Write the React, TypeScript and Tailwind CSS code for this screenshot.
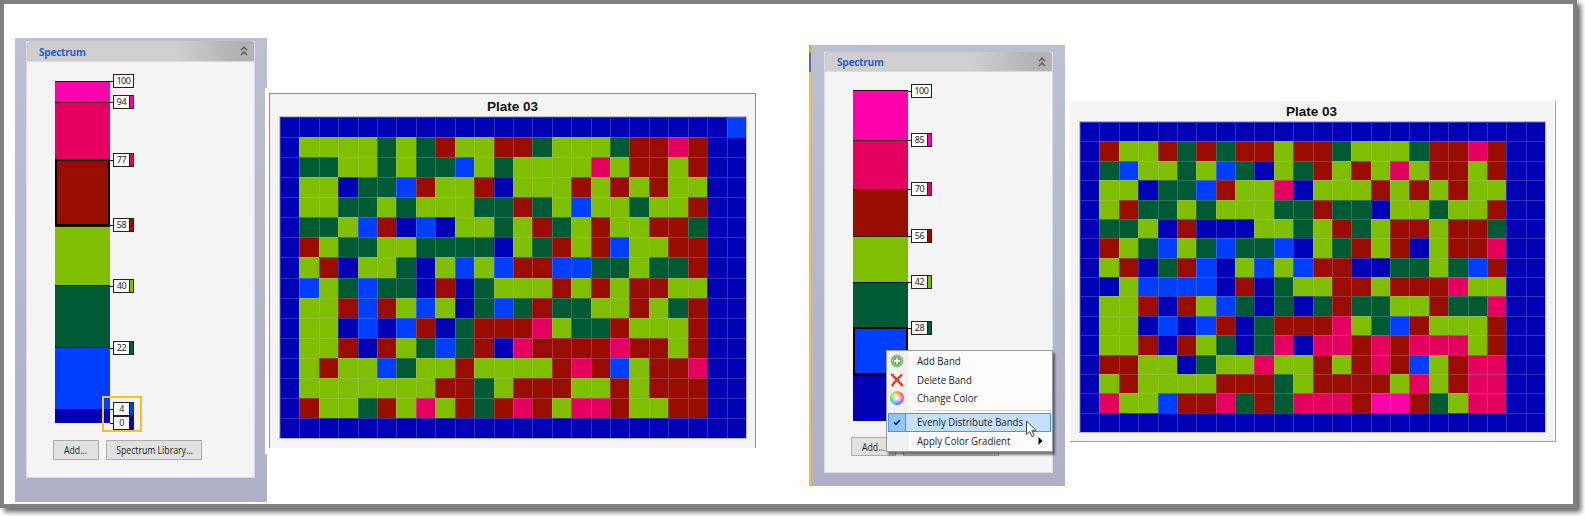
import React from "react";

const COLORS: Record<string, string> = {
  n: "bg-[#0000b4]",
  b: "bg-[#003fff]",
  g: "bg-[#005a34]",
  l: "bg-[#80bf00]",
  r: "bg-[#990d00]",
  p: "bg-[#e50060]",
  m: "bg-[#ff00aa]",
};

const PLATE_A = [
  "nnnnnnnnnnnnnnnnnnnnnnnb",
  "nllllglgrllrrglllgrrprnn",
  "nggllglggblgllllplrrlrnn",
  "nllnggbrllrnlllrlrlrllnn",
  "nllgglglllggrglbllgllrnn",
  "ngglbrnbnllglrglrllrrgnn",
  "nrlggllggggnlgrlrbllrrnn",
  "nlrnllgnlblbrrbbgglggrnn",
  "nblgbggnrnglllrlrlrrllnn",
  "nllrbrlblngbgrggllrlgrnn",
  "nllnbnbrngrrrplggrlllrnn",
  "nllrnrlgbgrnprrrrprrlrnn",
  "nlrllbgllrllllrprblrrpnn",
  "nlllllllrrglrrrllrlrrrnn",
  "nrllgrlplrgrprlpprllrrnn",
  "nnnnnnnnnnnnnnnnnnnnnnnn",
];

const PLATE_B = [
  "nnnnnnnnnnnnnnnnnnnnnnnn",
  "nrllrgrgrrlrrglllgrrprnn",
  "ngbllglbgnlgrlrlplrrlrnn",
  "nllnggbrllpnlllrlrlrllnn",
  "nlrgglglllggrggnllgllrnn",
  "ngglnrnnnllglrglrrlrrgnn",
  "nrlgblgbggbnlgrlrnlrrpnn",
  "nlrngrbnlblbrrnngglgbrnn",
  "nnlbbbbnrngllrrlrrrpllnn",
  "nllrnrlbgngngrggllrggpnn",
  "nllnbnbrngrrrplgbrlllrnn",
  "nllrnrlgngpnpprprppplrnn",
  "nrrllngllpllrlrprblrppnn",
  "nlrllllrrrglrrrrlplrppnn",
  "npllbrrpgrgppprmmrglppnn",
  "nnnnnnnnnnnnnnnnnnnnnnnn",
];

function Plate({ rows, size, title }: { rows: string[]; size: string; title: string }) {
  return (
    <>
      <div className={"text-center font-['Liberation_Sans',Arial,sans-serif] text-[13px] font-bold leading-[16px] text-[#111] " + title}>
        <span className="inline-block scale-x-[1.04]">Plate 03</span>
      </div>
      <div className={"grid grid-cols-[repeat(24,minmax(0,1fr))] grid-rows-[repeat(16,minmax(0,1fr))] outline-1 outline-[#b9bbd3] " + size}>
        {rows.flatMap((row, y) =>
          row.split("").map((c, x) => (
            <div key={y + "-" + x} className={"border-l border-t border-[#c8c8d8]/25 " + COLORS[c]} />
          )),
        )}
      </div>
    </>
  );
}

type Band = { color: string; h: number; selected?: boolean };
type Marker = { value: number; y: number; color?: string };

function Spectrum({ bands, markers, width }: { bands: Band[]; markers: Marker[]; width: string }) {
  return (
    <div className={"relative flex flex-col " + width}>
      {bands.map((b, i) => (
        <div
          key={i}
          className={(b.selected ? "border-2 border-black " : "border-t border-black/80 ") + COLORS[b.color]}
          style={{ height: b.h }}
        />
      ))}
      {markers.map((m) => (
        <div key={m.value} className="absolute left-full flex h-[14px] items-center" style={{ top: m.y - 7 }}>
          <div className="h-px w-[3px] bg-black" />
          <div className="flex h-[14px] w-[21px] border border-[#222] bg-white">
            <div className="flex-1 text-center font-['Noto_Sans',sans-serif] text-[9px] leading-[12px] tracking-[-0.4px] text-[#222]">
              {m.value}
            </div>
            {m.color && <div className={"w-[4px] border-l border-[#222] " + COLORS[m.color]} />}
          </div>
        </div>
      ))}
    </div>
  );
}

function Header({ h }: { h: string }) {
  return (
    <div className={"flex items-center justify-between rounded-t-[2px] border-b border-[#dcdcdc] bg-linear-to-r from-[#cfcfcf] from-65% to-[#b3b3b3] to-92% pl-[12px] pr-[6px] " + h}>
      <span className="mt-[2px] origin-left scale-x-[0.96] font-['Open_Sans','Noto_Sans',sans-serif] text-[10.5px] font-bold leading-none tracking-[-0.25px] text-[#2a60c8]">
        Spectrum
      </span>
      <svg width="8" height="10" viewBox="0 0 8 10" fill="none" stroke="#606060" strokeWidth="1.5">
        <path d="M1 4.3 4 1.2l3 3.1M1 9 4 5.9 7 9" />
      </svg>
    </div>
  );
}

function Button({ children, className }: { children: React.ReactNode; className: string }) {
  return (
    <button className={"flex items-center justify-center whitespace-nowrap border border-[#adadad] bg-[#e1e1e1] font-['Open_Sans','Noto_Sans',sans-serif] text-[11px] leading-none text-[#1c1c1c] " + className}>
      <span className="-mx-[10px] -mt-px scale-x-[0.79]">{children}</span>
    </button>
  );
}

function MenuLabel({ children, className }: { children: React.ReactNode; className: string }) {
  return <span className={"inline-block origin-left scale-x-[0.875] whitespace-nowrap " + className}>{children}</span>;
}

function ContextMenu() {
  return (
    <div className="absolute left-[61px] top-[298px] h-[102px] w-[167px] border border-[#9a9a9a] bg-[#fcfcfc] bg-linear-to-r from-[#f1f1f1] from-[21px] to-[#fcfcfc] to-[22px] pt-px font-['Open_Sans','Noto_Sans',sans-serif] text-[11px] text-[#222] shadow-[2px_3px_2px_rgba(0,0,0,0.5)]">
      <div className="flex h-[18.5px] items-center pl-[3px]">
        <svg width="14" height="14" viewBox="0 0 14 14">
          <circle cx="7" cy="7" r="6" fill="#6db35d" stroke="#8fbf83" />
          <circle cx="7" cy="7" r="4.3" fill="#63ad50" stroke="#b9ddb0" strokeWidth=".7" />
          <path d="M7 4.200v5.600M4.200 7h5.600" stroke="#fff" strokeWidth="1.8" />
        </svg>
        <MenuLabel className="ml-[13px]">Add Band</MenuLabel>
      </div>
      <div className="flex h-[18.5px] items-center pl-[3px]">
        <svg width="14" height="14" viewBox="0 0 14 14" fill="none" stroke="#e23b22" strokeLinecap="round">
          <path d="M2 1.600C4.500 4 9 8.500 12 12.300" strokeWidth="2.400" />
          <path d="M11.500 2C8.500 5 4.500 8.500 2.300 12.500" strokeWidth="2.200" />
        </svg>
        <MenuLabel className="ml-[13px]">Delete Band</MenuLabel>
      </div>
      <div className="flex h-[18.5px] items-center pl-[3px]">
        <div className="size-[14px] rounded-full bg-[radial-gradient(circle,#fff_5%,rgba(255,255,255,0)_65%),conic-gradient(#f4a03a,#ff5a4a,#f04fb0,#b050f0,#5a6af5,#3ac8f0,#3be08a,#c0ea40,#f4a03a)]" />
        <MenuLabel className="ml-[13px]">Change Color</MenuLabel>
      </div>
      <div className="mb-[2px] ml-[27px] mt-[2px] h-px bg-[#d4d4d4]" />
      <div className="mx-px flex h-[19px] items-center border border-[#3c9bf4] bg-[#c4e0fd]">
        <div className="flex h-full w-[17px] shrink-0 items-center justify-center border-r border-[#3c9bf4] bg-[#92c6f9]">
          <svg width="8" height="7" viewBox="0 0 8 7" fill="none" stroke="#10203c" strokeWidth="1.5">
            <path d="m1 3.300 2 2L7 1" />
          </svg>
        </div>
        <MenuLabel className="-mr-[20px] ml-[11px]">Evenly Distribute Bands</MenuLabel>
      </div>
      <div className="flex h-[19px] items-center justify-between pl-[30px] pr-[9px]">
        <MenuLabel className="">Apply Color Gradient</MenuLabel>
        <svg width="5" height="8" viewBox="0 0 5 8">
          <path d="M.5 0 4.500 4 .5 8z" fill="#000" />
        </svg>
      </div>
      <svg className="absolute left-[138px] top-[69px]" width="13" height="19" viewBox="0 0 13 19">
        <path d="M1.500 1v13.500l3.200-2.900 2.300 5 2.200-1-2.300-4.900h4.400z" fill="#fff" stroke="#444" strokeWidth="1" />
      </svg>
    </div>
  );
}

export default function App() {
  return (
    <div className="h-[516px] w-[1585px] overflow-hidden bg-white">
      <div className="flex h-[508px] w-[1577px] items-start border-4 border-[#808080] bg-white shadow-[4px_4px_5px_rgba(0,0,0,0.6)]">
        <section className="ml-[11px] mt-[34px] h-[464px] w-[252px] shrink-0 bg-linear-to-b from-[#bcbed2] to-[#b0b1c9] pl-[11px] pt-[3px]">
          <div className="flex h-[437px] w-[229px] flex-col border border-t-0 border-[#dcdce6] bg-[#f4f4f4]">
            <Header h="h-[21px]" />
            <div className="ml-[28px] mt-[19px]">
              <Spectrum
                width="w-[55px]"
                bands={[
                  { color: "m", h: 21 },
                  { color: "p", h: 57 },
                  { color: "r", h: 67, selected: true },
                  { color: "l", h: 59 },
                  { color: "g", h: 62 },
                  { color: "b", h: 62 },
                  { color: "n", h: 14 },
                ]}
                markers={[
                  { value: 100, y: 0 },
                  { value: 94, y: 21, color: "m" },
                  { value: 77, y: 79, color: "p" },
                  { value: 58, y: 144, color: "r" },
                  { value: 40, y: 205, color: "l" },
                  { value: 22, y: 267, color: "g" },
                  { value: 4, y: 328, color: "b" },
                  { value: 0, y: 342, color: "n" },
                ]}
              />
            </div>
            <div className="relative ml-[26px] mt-[17px] flex gap-[7px]">
              <Button className="h-[20px] w-[46px]">Add...</Button>
              <Button className="h-[20px] w-[96px]">Spectrum Library...</Button>
              <div className="absolute left-[49px] top-[-44px] h-[36px] w-[40px] border-2 border-[#fdc01b]" />
            </div>
          </div>
        </section>

        <section className="relative -ml-[2px] mt-[84px] h-[366px] w-[493px] shrink-0 bg-white pl-[4px] pt-[5px]">
          <div className="h-[355px] w-[487px] border border-b-0 border-[#8c8c8c] bg-[#f4f4f4] pl-[10px]">
            <Plate rows={PLATE_A} size="h-[321px] w-[466px]" title="w-[465px] mt-[5px] mb-[2px]" />
          </div>
        </section>

        <div className="ml-[51px] mt-[41px] flex h-[441px] w-[2px] shrink-0 flex-col bg-[#f0bd55]">
          <div className="h-[8px] bg-[#b5bd20]" />
          <div className="h-[19px] bg-[#7060a0]" />
        </div>
        <section className="mr-px mt-[41px] h-[441px] w-[254px] shrink-0 bg-linear-to-b from-[#bcbed2] to-[#b0b1c9] pl-[13px] pt-[7px]">
          <div className="relative flex h-[421px] w-[229px] flex-col border border-t-0 border-[#dcdce6] bg-[#f4f4f4]">
            <Header h="h-[20px]" />
            <div className="ml-[28px] mt-[18px]">
              <Spectrum
                width="w-[55px]"
                bands={[
                  { color: "m", h: 50 },
                  { color: "p", h: 49 },
                  { color: "r", h: 47 },
                  { color: "l", h: 46 },
                  { color: "g", h: 45 },
                  { color: "b", h: 48, selected: true },
                  { color: "n", h: 46 },
                ]}
                markers={[
                  { value: 100, y: 1 },
                  { value: 85, y: 50, color: "m" },
                  { value: 70, y: 99, color: "p" },
                  { value: 56, y: 146, color: "r" },
                  { value: 42, y: 192, color: "l" },
                  { value: 28, y: 238, color: "g" },
                ]}
              />
            </div>
            <div className="ml-[26px] mt-[16px] flex gap-[7px]">
              <Button className="h-[19px] w-[45px]">Add...</Button>
              <Button className="h-[19px] w-[96px]">{null}</Button>
            </div>
            <ContextMenu />
          </div>
        </section>

        <section className="ml-[4px] mt-[97px] h-[341px] w-[486px] shrink-0 border-b border-r border-[#a0a0a0] bg-[#f4f4f4] pl-[10px]">
          <Plate rows={PLATE_B} size="h-[310px] w-[465px]" title="w-[464px] mt-[3px] mb-[2px]" />
        </section>
      </div>
    </div>
  );
}
